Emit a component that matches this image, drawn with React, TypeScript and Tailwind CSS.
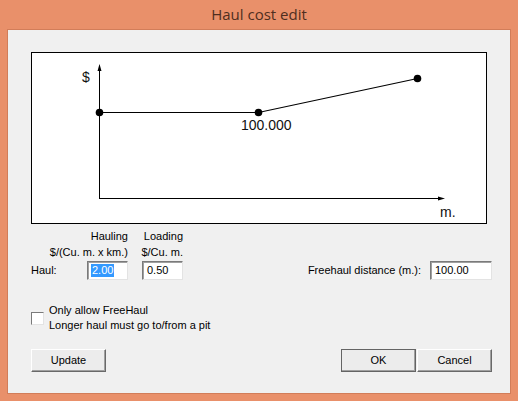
import React from "react";

const font = { fontFamily: '"Liberation Sans", Arial, sans-serif' };

function Chart() {
  return (
    <div className="ml-[23px] mt-[22px] h-[172px] w-[456px] border border-black bg-white">
      <svg width="454" height="170" viewBox="0 0 454 170" className="block">
        {/* axes */}
        <line x1="67.5" y1="14" x2="67.5" y2="145.5" stroke="black" strokeWidth="1" />
        <line x1="67" y1="145.5" x2="408" y2="145.5" stroke="black" strokeWidth="1" />
        <polygon points="67.5,11 65.5,18 69.5,18" fill="black" />
        <polygon points="413,145.5 406,143.5 406,147.5" fill="black" />
        {/* cost curve */}
        <polyline points="67.5,59.5 226.5,59.5 385.5,25.5" fill="none" stroke="black" strokeWidth="1.2" />
        <circle cx="67.5" cy="59.5" r="3.8" fill="black" />
        <circle cx="226.5" cy="59.5" r="3.8" fill="black" />
        <circle cx="385.5" cy="25.5" r="3.8" fill="black" />
        <text x="50" y="29" fontSize="14" fontFamily='"Liberation Sans", Arial, sans-serif' fill="#111">$</text>
        <text x="209" y="77" fontSize="14" fontFamily='"Liberation Sans", Arial, sans-serif' fill="#111">100.000</text>
        <text x="408" y="164" fontSize="14" fontFamily='"Liberation Sans", Arial, sans-serif' fill="#111">m.</text>
      </svg>
    </div>
  );
}

function Field({ value, width, selected }: { value: string; width: string; selected?: boolean }) {
  return (
    <div
      className={`${width} h-[19px] flex items-center bg-white border border-t-[#7a7a7a] border-l-[#7a7a7a] border-r-[#e3e3e3] border-b-[#e3e3e3] shadow-[inset_1px_1px_0_#a0a0a0] pl-[3px]`}
    >
      <span className={selected ? "bg-[#3399ff] text-white leading-[13px] px-[1px]" : "leading-[13px] px-[1px]"}>
        {value}
      </span>
    </div>
  );
}

function WinButton({ label, isDefault }: { label: string; isDefault?: boolean }) {
  return (
    <button
      className={`w-[75px] h-[23px] flex items-center justify-center bg-[#ececec] text-black text-[11px] ${
        isDefault ? "outline outline-1 outline-[#646464] -outline-offset-1" : ""
      } border border-t-white border-l-white border-r-[#696969] border-b-[#696969] shadow-[inset_-1px_-1px_0_#a0a0a0]`}
      style={font}
    >
      {label}
    </button>
  );
}

export default function App() {
  return (
    <div className="w-[518px] h-[401px] bg-[#e9906a] flex flex-col" style={font}>
      <div
        className="h-[29px] flex items-center justify-center text-[15px] text-[#4f2e20]"
        style={{ fontFamily: '"Open Sans", "Noto Sans", sans-serif' }}
      >
        Haul cost edit
      </div>
      <div className="mx-[7px] mb-[7px] flex-1 flex flex-col bg-[#f0f0f0] border border-[#d27d59] text-[11px] text-black">
        <Chart />

        <div className="mt-[4px] ml-[23px] mr-[18px] flex items-end">
          <div className="w-[56px] h-[19px] flex items-center">Haul:</div>
          <div className="flex flex-col items-end w-[41px]">
            <div className="whitespace-nowrap leading-[16px]">Hauling</div>
            <div className="whitespace-nowrap leading-[16px] mb-[1px]">$/(Cu. m. x km.)</div>
            <Field value="2.00" width="w-[41px]" selected />
          </div>
          <div className="flex flex-col items-end w-[41px] ml-[14px]">
            <div className="whitespace-nowrap leading-[16px]">Loading</div>
            <div className="whitespace-nowrap leading-[16px] mb-[1px]">$/Cu. m.</div>
            <Field value="0.50" width="w-[41px]" />
          </div>
          <div className="flex-1 flex items-center justify-end gap-[9px]">
            <span>Freehaul distance (m.):</span>
            <Field value="100.00" width="w-[62px]" />
          </div>
        </div>

        <div className="mt-[23px] ml-[23px] flex items-center gap-[5px]">
          <div className="w-[13px] h-[13px] bg-white border border-t-[#7a7a7a] border-l-[#7a7a7a] border-r-[#e3e3e3] border-b-[#e3e3e3] mt-[1px]" />
          <div className="flex flex-col">
            <span className="leading-[15px]">Only allow FreeHaul</span>
            <span className="leading-[15px]">Longer haul must go to/from a pit</span>
          </div>
        </div>

        <div className="mt-[16px] ml-[23px] mr-[18px] flex items-center">
          <WinButton label="Update" />
          <div className="flex-1" />
          <WinButton label="OK" isDefault />
          <div className="w-[1px]" />
          <WinButton label="Cancel" />
        </div>
      </div>
    </div>
  );
}
